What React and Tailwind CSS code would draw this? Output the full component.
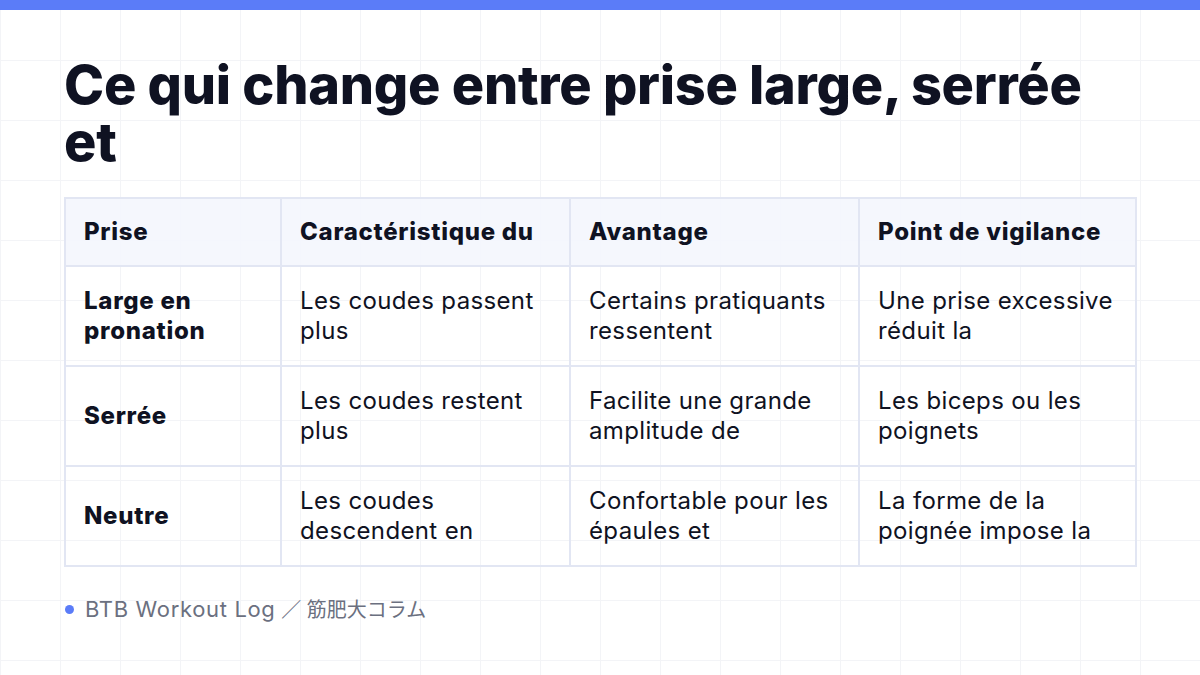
import React from "react";

const font = { fontFamily: 'Inter, "Noto Sans CJK JP", "Noto Sans", sans-serif' };

const rows = [
  ["Large en pronation", "Les coudes passent plus", "Certains pratiquants ressentent", "Une prise excessive réduit la"],
  ["Serrée", "Les coudes restent plus", "Facilite une grande amplitude de", "Les biceps ou les poignets"],
  ["Neutre", "Les coudes descendent en", "Confortable pour les épaules et", "La forme de la poignée impose la"],
];

const headers = ["Prise", "Caractéristique du", "Avantage", "Point de vigilance"];
const widths = ["w-[216px]", "w-[289px]", "w-[289px]", "w-[277px]"];

export default function App() {
  return (
    <div
      style={font}
      className="w-[1200px] h-[675px] overflow-hidden bg-white bg-[linear-gradient(to_right,#f3f4f7_1px,transparent_1px),linear-gradient(to_bottom,#f3f4f7_1px,transparent_1px)] bg-[size:60px_60px] flex flex-col"
    >
      <div className="h-[10px] bg-[#5b7cf8] shrink-0" />
      <div className="px-[64px] pt-[46px] flex flex-col">
        <h1 className="text-[54px] leading-[57px] font-extrabold tracking-[-0.005em] text-[#0f1222] w-[1072px]">
          Ce qui change entre prise large, serrée et
        </h1>
        <table className="mt-[27px] w-[1071px] border-collapse table-fixed text-[24px] leading-[30px] text-[#0f1222]">
          <colgroup>
            {widths.map((w, i) => (
              <col key={i} className={w} />
            ))}
          </colgroup>
          <thead>
            <tr className="bg-[#f4f6fd]/90">
              {headers.map((h, i) => (
                <th
                  key={i}
                  className="border-2 border-[#e2e6f3] px-[18px] py-[18px] text-left font-extrabold tracking-[0.03em] align-middle whitespace-nowrap"
                >
                  {h}
                </th>
              ))}
            </tr>
          </thead>
          <tbody>
            {rows.map((r, ri) => (
              <tr key={ri}>
                {r.map((c, ci) => (
                  <td
                    key={ci}
                    className={`border-2 border-[#e2e6f3] px-[18px] py-[19px] align-middle ${
                      ci === 0 ? "font-extrabold tracking-[0.03em]" : "font-normal tracking-[0.015em]"
                    }`}
                  >
                    <div className="h-[60px] flex items-center">{c}</div>
                  </td>
                ))}
              </tr>
            ))}
          </tbody>
        </table>
        <div className="mt-[28px] flex items-center gap-[11px] text-[22px] leading-[28px] text-[#6b7080]">
          <span className="w-[9px] h-[9px] rounded-full bg-[#5b7cf8] ml-[1px] shrink-0" />
          <span>
            <span className="tracking-[0.03em]">BTB Workout Log</span>
            <span className="text-[20px] tracking-normal"> ／ 筋肥大コラム</span>
          </span>
        </div>
      </div>
    </div>
  );
}
